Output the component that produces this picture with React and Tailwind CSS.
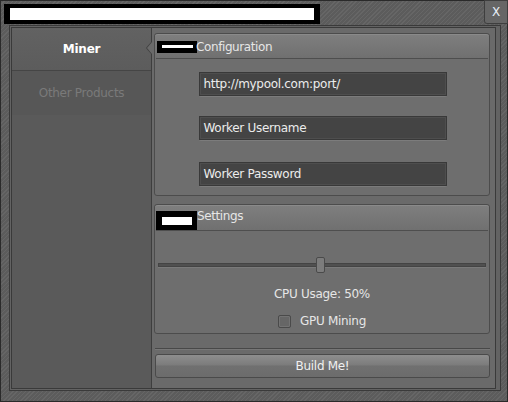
import React from "react";

const hatch =
  "bg-[repeating-linear-gradient(135deg,#5c5c5c_0px,#5c5c5c_2px,#666666_2px,#666666_3px)]";

function Redact({ w, h, inner }) {
  return (
    <div className={`bg-black flex items-center justify-center shrink-0 ${w} ${h}`}>
      <div className={`bg-white ${inner}`} />
    </div>
  );
}

function Field({ text }) {
  return (
    <div className="w-[248px] h-[25px] border-b border-[#7c7c7c] rounded-[2px]">
      <div className="h-[24px] bg-[#444444] border border-[#393939] shadow-[inset_0_0_0_1px_#4e4e4e] flex items-center pl-[4px] text-[12px] tracking-[-0.3px] text-[#ececec]">
        {text}
      </div>
    </div>
  );
}

export default function App() {
  return (
    <div
      className={`w-[508px] h-[402px] ${hatch} border border-[#2a2a2a] flex flex-col text-[#e6e6e6]`}
      style={{ fontFamily: '"DejaVu Sans", Verdana, sans-serif' }}
    >
      {/* title bar */}
      <div className="h-[24px] flex items-start shrink-0">
        <div className="ml-[3px] mt-[3px] w-[316px] h-[20px] bg-black flex items-center pl-[6px]">
          <div className="w-[304px] h-[12px] bg-white" />
        </div>
        <div className="flex-1" />
        <div className="w-[24px] h-[24px] -mt-px -mr-px rounded-bl-[3px] border border-[#3e3e3e] bg-[#666666] flex items-center justify-center text-[12px] text-[#e8eef8]">
          X
        </div>
      </div>

      {/* frame */}
      <div className="ml-[8px] mr-[6px] mt-[0px] h-[366px] border border-[#3a3a3a] bg-[#636363] p-px pr-[4px]">
        <div className="h-full border border-[#3a3a3a] flex">
          {/* sidebar */}
          <div className="w-[140px] bg-[#5a5a5a] border-r border-[#3e3e3e] flex flex-col relative">
            <div className="h-[43px] bg-[linear-gradient(#626262,#5c5c5c)] border-b border-[#454545] flex items-center justify-center text-[12px] font-bold text-white tracking-[-0.2px]">
              Miner
            </div>
            <div className="h-[44px] bg-[#575757] flex items-center justify-center text-[12px] text-[#7a7a7a] tracking-[-0.3px]">
              Other Products
            </div>
            <div className="absolute right-[-1px] top-[13px] w-0 h-0 border-y-[7px] border-y-transparent border-r-[6px] border-r-[#3e3e3e]" />
            <div className="absolute right-[-1px] top-[14px] w-0 h-0 border-y-[6px] border-y-transparent border-r-[5px] border-r-[#6a6a6a]" />
          </div>

          {/* main */}
          <div className="flex-1 bg-[#6a6a6a] pl-[2px] pr-[5px] pt-[5px] flex flex-col">
            {/* Configuration */}
            <div className="h-[163px] border border-[#4c4c4c] rounded-[3px] bg-[#6e6e6e] flex flex-col">
              <div className="h-[24px] bg-[linear-gradient(#7e7e7e,#707070)] border-t border-[#8a8a8a] rounded-t-[3px] flex items-center pl-[2px] text-[12px] tracking-[-0.4px]">
                <Redact w="w-[40px]" h="h-[12px]" inner="w-[31px] h-[3px]" />
                <span className="-ml-px">Configuration</span>
              </div>
              <div className="h-px bg-[#4e4e4e] mx-px" />
              <div className="flex flex-col items-center pl-[1px] gap-[19px] pt-[13px] [&>*:nth-child(2)]:mb-[2px]">
                <Field text="http://mypool.com:port/" />
                <Field text="Worker Username" />
                <Field text="Worker Password" />
              </div>
            </div>

            {/* Settings */}
            <div className="mt-[8px] h-[130px] border border-[#4c4c4c] rounded-[3px] bg-[#6e6e6e] flex flex-col">
              <div className="h-[25px] bg-[linear-gradient(#7e7e7e,#707070)] border-t border-[#8a8a8a] rounded-t-[3px] flex items-end pl-px text-[12px] tracking-[-0.4px]">
                <Redact w="w-[41px]" h="h-[19px]" inner="w-[30px] h-[8px] mt-[1px]" />
                <span className="self-center -mt-[4px]">Settings</span>
              </div>
              <div className="h-px bg-[#4e4e4e] mx-px" />
              <div className="relative mt-[32px] mx-[3px] h-[4px] bg-[#505050] border border-[#444] shadow-[0_1px_0_#7a7a7a]">
                <div className="absolute left-[157px] top-[-7px] w-[9px] h-[16px] bg-[#7c7c7c] border border-[#4a4a4a] rounded-[2px]" />
              </div>
              <div className="mt-[20px] text-center text-[12px] leading-[14px] tracking-[-0.3px]">CPU Usage: 50%</div>
              <div className="mt-[13px] flex items-center justify-center gap-[9px] text-[12px] leading-[14px] tracking-[-0.3px]">
                <div className="w-[13px] h-[13px] bg-[#666666] border border-[#4a4a4a] rounded-[2px] shadow-[inset_0_0_0_1px_#737373]" />
                <span>GPU Mining</span>
              </div>
            </div>

            <div className="mt-[14px] ml-px h-px bg-[#484848] shadow-[0_1px_0_#777777]" />
            <div className="mt-[5px] ml-px h-[24px] border border-[#4a4a4a] rounded-[3px] bg-[linear-gradient(#8e8e8e_0%,#7c7c7c_45%,#707070_50%,#6c6c6c_100%)] flex items-center justify-center text-[12px] text-[#f0f0f0] tracking-[-0.3px]">
              Build Me!
            </div>
          </div>
        </div>
      </div>
    </div>
  );
}
